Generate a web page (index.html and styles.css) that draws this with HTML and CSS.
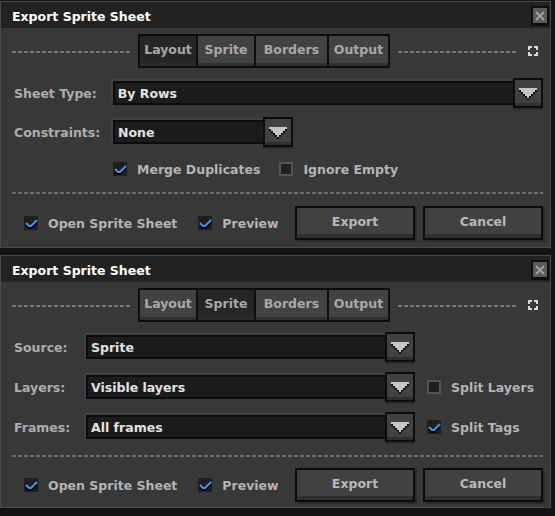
FILE: index.html
```html
<!DOCTYPE html>
<html>
<head>
<meta charset="utf-8">
<link rel="stylesheet" href="styles.css">
</head>
<body>
<div class="dialog first">
  <div class="titlebar">
    <span class="title">Export Sprite Sheet</span>
    <span class="close"><svg width="10" height="10" viewBox="0 0 10 10"><path d="M1 1L9 9M9 1L1 9" stroke="#a0a0a0" stroke-width="2" fill="none"/></svg></span>
  </div>
  <div class="content">
    <div class="tabrow">
      <span class="dash"></span>
      <div class="tabs">
        <span class="tab t-layout sel">Layout</span>
        <span class="tab t-sprite">Sprite</span>
        <span class="tab t-borders">Borders</span>
        <span class="tab t-output">Output</span>
      </div>
      <span class="dash"></span>
      <svg class="expand" width="10" height="10" viewBox="0 0 10 10"><path d="M0 0h4v2H2v2H0z M6 0h4v4H8V2H6z M0 6h2v2h2v2H0z M8 6h2v4H6V8h2z" fill="#d8d8d8"/></svg>
    </div>
    <div class="row r1">
      <span class="label lw1">Sheet Type:</span>
      <span class="field f-sheet">By Rows</span>
      <span class="drop"><svg width="18" height="12" viewBox="0 0 18 12"><path d="M0 2H18V4H16V6H14V8H12V10H10V12H8V10H6V8H4V6H2V4H0Z" fill="#0e0e0e"/><path d="M0 0H18V2H16V4H14V6H12V8H10V10H8V8H6V6H4V4H2V2H0Z" fill="#c6c6c6"/></svg></span>
    </div>
    <div class="row r2">
      <span class="label lw1">Constraints:</span>
      <span class="field f-cons">None</span>
      <span class="drop"><svg width="18" height="12" viewBox="0 0 18 12"><path d="M0 2H18V4H16V6H14V8H12V10H10V12H8V10H6V8H4V6H2V4H0Z" fill="#0e0e0e"/><path d="M0 0H18V2H16V4H14V6H12V8H10V10H8V8H6V6H4V4H2V2H0Z" fill="#c6c6c6"/></svg></span>
    </div>
    <div class="checkrow">
      <span class="check"><span class="box on"><svg width="14" height="14" viewBox="0 0 14 14"><polyline points="2,9 5,12 7,12 13,6" stroke="#000" stroke-width="2" fill="none"/><polyline points="2,7 5,10 7,10 13,4" stroke="#3d97ea" stroke-width="2" fill="none"/></svg></span><span class="ctext">Merge Duplicates</span></span>
      <span class="check c-ignore"><span class="box off"></span><span class="ctext">Ignore Empty</span></span>
    </div>
    <div class="sep s1"></div>
    <div class="actions a1">
      <span class="check c-open"><span class="box on"><svg width="14" height="14" viewBox="0 0 14 14"><polyline points="2,9 5,12 7,12 13,6" stroke="#000" stroke-width="2" fill="none"/><polyline points="2,7 5,10 7,10 13,4" stroke="#3d97ea" stroke-width="2" fill="none"/></svg></span><span class="ctext">Open Sprite Sheet</span></span>
      <span class="check c-prev"><span class="box on"><svg width="14" height="14" viewBox="0 0 14 14"><polyline points="2,9 5,12 7,12 13,6" stroke="#000" stroke-width="2" fill="none"/><polyline points="2,7 5,10 7,10 13,4" stroke="#3d97ea" stroke-width="2" fill="none"/></svg></span><span class="ctext">Preview</span></span>
      <span class="btns"><span class="btn">Export</span><span class="btn">Cancel</span></span>
    </div>
  </div>
</div>

<div class="dialog second">
  <div class="titlebar">
    <span class="title">Export Sprite Sheet</span>
    <span class="close"><svg width="10" height="10" viewBox="0 0 10 10"><path d="M1 1L9 9M9 1L1 9" stroke="#a0a0a0" stroke-width="2" fill="none"/></svg></span>
  </div>
  <div class="content">
    <div class="tabrow">
      <span class="dash"></span>
      <div class="tabs">
        <span class="tab t-layout">Layout</span>
        <span class="tab t-sprite sel">Sprite</span>
        <span class="tab t-borders">Borders</span>
        <span class="tab t-output">Output</span>
      </div>
      <span class="dash"></span>
      <svg class="expand" width="10" height="10" viewBox="0 0 10 10"><path d="M0 0h4v2H2v2H0z M6 0h4v4H8V2H6z M0 6h2v2h2v2H0z M8 6h2v4H6V8h2z" fill="#d8d8d8"/></svg>
    </div>
    <div class="row r1">
      <span class="label lw2">Source:</span>
      <span class="field f-src">Sprite</span>
      <span class="drop"><svg width="18" height="12" viewBox="0 0 18 12"><path d="M0 2H18V4H16V6H14V8H12V10H10V12H8V10H6V8H4V6H2V4H0Z" fill="#0e0e0e"/><path d="M0 0H18V2H16V4H14V6H12V8H10V10H8V8H6V6H4V4H2V2H0Z" fill="#c6c6c6"/></svg></span>
    </div>
    <div class="row r3">
      <span class="label lw2">Layers:</span>
      <span class="field f-src">Visible layers</span>
      <span class="drop"><svg width="18" height="12" viewBox="0 0 18 12"><path d="M0 2H18V4H16V6H14V8H12V10H10V12H8V10H6V8H4V6H2V4H0Z" fill="#0e0e0e"/><path d="M0 0H18V2H16V4H14V6H12V8H10V10H8V8H6V6H4V4H2V2H0Z" fill="#c6c6c6"/></svg></span>
      <span class="check c-side"><span class="box off"></span><span class="ctext">Split Layers</span></span>
    </div>
    <div class="row r3">
      <span class="label lw2">Frames:</span>
      <span class="field f-src">All frames</span>
      <span class="drop"><svg width="18" height="12" viewBox="0 0 18 12"><path d="M0 2H18V4H16V6H14V8H12V10H10V12H8V10H6V8H4V6H2V4H0Z" fill="#0e0e0e"/><path d="M0 0H18V2H16V4H14V6H12V8H10V10H8V8H6V6H4V4H2V2H0Z" fill="#c6c6c6"/></svg></span>
      <span class="check c-side"><span class="box on"><svg width="14" height="14" viewBox="0 0 14 14"><polyline points="2,9 5,12 7,12 13,6" stroke="#000" stroke-width="2" fill="none"/><polyline points="2,7 5,10 7,10 13,4" stroke="#3d97ea" stroke-width="2" fill="none"/></svg></span><span class="ctext">Split Tags</span></span>
    </div>
    <div class="sep s2"></div>
    <div class="actions a2">
      <span class="check c-open"><span class="box on"><svg width="14" height="14" viewBox="0 0 14 14"><polyline points="2,9 5,12 7,12 13,6" stroke="#000" stroke-width="2" fill="none"/><polyline points="2,7 5,10 7,10 13,4" stroke="#3d97ea" stroke-width="2" fill="none"/></svg></span><span class="ctext">Open Sprite Sheet</span></span>
      <span class="check c-prev"><span class="box on"><svg width="14" height="14" viewBox="0 0 14 14"><polyline points="2,9 5,12 7,12 13,6" stroke="#000" stroke-width="2" fill="none"/><polyline points="2,7 5,10 7,10 13,4" stroke="#3d97ea" stroke-width="2" fill="none"/></svg></span><span class="ctext">Preview</span></span>
      <span class="btns"><span class="btn">Export</span><span class="btn">Cancel</span></span>
    </div>
  </div>
</div>
</body>
</html>
```

FILE: styles.css
```css
* { box-sizing: border-box; }
html, body { margin: 0; padding: 0; }
body {
  width: 555px;
  height: 516px;
  overflow: hidden;
  background: #141414;
  font-family: "DejaVu Sans", "Liberation Sans", sans-serif;
  font-weight: bold;
  font-size: 12.5px;
  color: #b2b2b2;
}
.dialog {
  width: 551px;
  border: 1px solid #4a4a4a;
  background: #383838;
}
.first { margin-top: 1px; }
.second { margin-top: 7px; }

.titlebar {
  height: 26px;
  background: #222222;
  display: flex;
  align-items: flex-start;
  justify-content: space-between;
  padding-left: 11px;
}
.title {
  color: #ffffff;
  line-height: 26px;
  padding-top: 2px;
}
.close {
  width: 18px;
  height: 20px;
  margin-top: 4px;
  margin-right: 1px;
  border: 2px solid #0e0e0e;
  border-bottom-width: 3px;
  background: #5a5a5a;
  display: flex;
  align-items: center;
  justify-content: center;
}
.close svg { display: block; }

.content {
  padding: 0 7px 7px 11px;
}
.second .content { padding-bottom: 5px; }

.tabrow {
  margin-top: 6px;
  height: 34px;
  display: flex;
  align-items: center;
  gap: 8px;
}
.dash {
  flex: 1;
  height: 2px;
  margin-top: 1px;
  background: repeating-linear-gradient(90deg, #767676 0 4px, transparent 4px 6px);
}
.expand { display: block; margin-left: 4px; margin-right: 5px; }
.tabs {
  display: flex;
  gap: 2px;
  border: 2px solid #0e0e0e;
  background: #0e0e0e;
}
.tab {
  height: 30px;
  padding-bottom: 3px;
  display: flex;
  align-items: center;
  justify-content: center;
  background: #424242;
  box-shadow: inset 0 -3px 0 #303030;
  color: #a8a8a8;
}
.tab.sel {
  background: #262626;
  box-shadow: inset 0 -3px 0 #2c2c2c;
}
.t-layout { width: 56px; }
.t-sprite { width: 56px; }
.t-borders { width: 71px; }
.t-output { width: 59px; }

.row {
  height: 30px;
  display: flex;
  align-items: center;
}
.r1 { margin-top: 10px; }
.r2 { margin-top: 9px; }
.r3 { margin-top: 10px; }
.label {
  padding-left: 2px;
  color: #adadad;
}
.lw1 { width: 101px; }
.lw2 { width: 74px; }
.field {
  height: 24px;
  border: 2px solid #0c0c0c;
  background: #1c1c1c;
  box-shadow: -2px -2px 0 #414141;
  color: #e2e2e2;
  padding-left: 3px;
  display: flex;
  align-items: center;
}
.f-sheet { width: 403px; }
.f-cons { width: 152px; }
.f-src { width: 301px; }
.drop {
  width: 30px;
  height: 30px;
  margin-left: -2px;
  border: 2px solid #0c0c0c;
  background: #414141;
  box-shadow: inset 0 -3px 0 #2f2f2f, 0 2px 0 #2c2c2c;
  display: flex;
  align-items: center;
  justify-content: center;
  padding-top: 1px;
}
.drop svg { display: block; }

.check {
  display: flex;
  align-items: center;
}
.box {
  width: 14px;
  height: 14px;
  background: #1e1e1e;
  flex: none;
}
.box svg { display: block; overflow: visible; }
.box.off {
  border: 2px solid #545454;
  background: #1f1f1f;
}
.ctext {
  margin-left: 10px;
  color: #b4b4b4;
}
.checkrow {
  margin-top: 10px;
  height: 24px;
  display: flex;
  align-items: center;
  padding-left: 101px;
}
.c-ignore { margin-left: 19px; }
.c-side { margin-left: 12px; }

.sep {
  height: 2px;
  background: repeating-linear-gradient(90deg, #6c6c6c 0 4px, transparent 4px 6px);
}
.s1 { margin-top: 11px; }
.s2 { margin-top: 13px; }

.actions {
  height: 34px;
  display: flex;
  align-items: center;
}
.a1 { margin-top: 12px; }
.a2 { margin-top: 11px; }
.c-open { margin-left: 12px; }
.c-prev { margin-left: 21px; }
.btns {
  margin-left: auto;
  display: flex;
  gap: 8px;
}
.btn {
  width: 120px;
  height: 34px;
  border: 2px solid #0c0c0c;
  background: #414141;
  box-shadow: inset 0 -4px 0 #303030, 2px 2px 0 #2c2c2c;
  padding-bottom: 4px;
  display: flex;
  align-items: center;
  justify-content: center;
  color: #b8b8b8;
}
```
